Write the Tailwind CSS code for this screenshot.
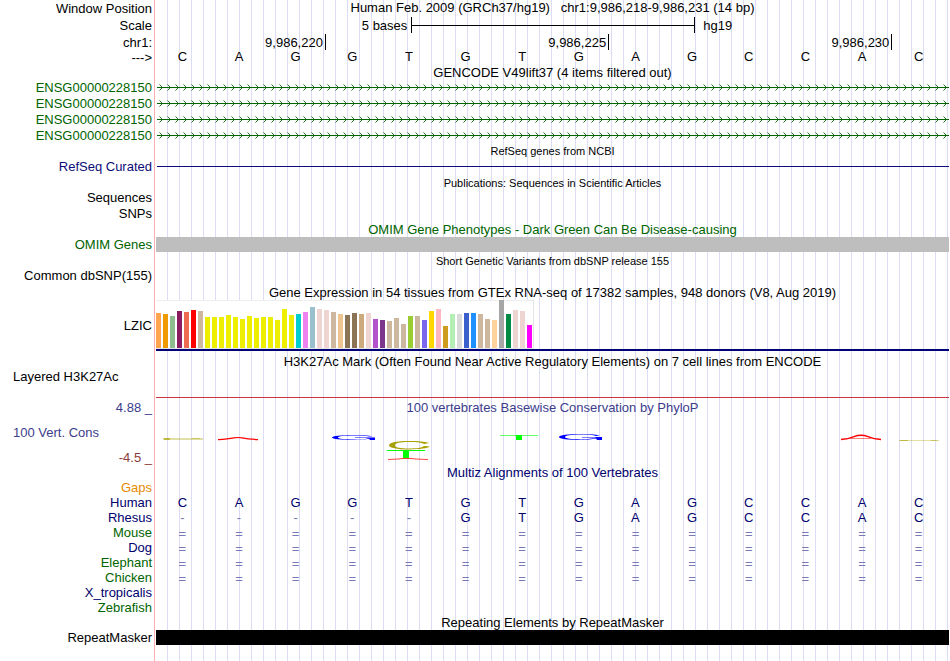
<!DOCTYPE html>
<html lang="en">
<head>
    <meta charset="UTF-8">
    <meta name="viewport" content="width=device-width, initial-scale=1.0">
    <title>Human chr1:9,986,218-9,986,231 - Genome Browser</title>
    <script src="https://cdn.jsdelivr.net/npm/@tailwindcss/browser@4"></script>
</head>
<body class="bg-white font-['Liberation_Sans',Arial,sans-serif] text-[13px] leading-[15px] text-black">
    <!-- Guide lines are painted behind every track -->
    <main class="min-h-screen pr-px bg-[linear-gradient(#ffb0b0,#ffb0b0),repeating-linear-gradient(to_right,transparent_0_11px,#dcdcf5_11px_12px)] bg-size-[1px_100%,100%_100%] bg-[position:154px_0,156px_0] bg-no-repeat">

        <!-- Ruler -->
        <section>
            <div class="grid grid-cols-[156px_1fr]">
                <div class="pt-px pr-1 text-right">Window Position</div>
                <h1 class="text-center whitespace-pre">Human Feb. 2009 (GRCh37/hg19)   chr1:9,986,218-9,986,231 (14 bp)</h1>
            </div>
            <div class="grid grid-cols-[156px_1fr] pt-px">
                <div class="pt-px pr-1 text-right">Scale</div>
                <div class="flex items-center">
                    <div class="w-[32.2%] pr-1 text-right">5 bases</div>
                    <div class="flex h-4 w-[35.8%] items-center border-x border-black">
                        <div class="h-px w-full bg-black"></div>
                    </div>
                    <div class="pl-2">hg19</div>
                </div>
            </div>
            <div class="grid grid-cols-[156px_1fr] pt-px">
                <div class="pt-px pr-1 text-right">chr1:</div>
                <div class="grid grid-cols-14 text-right">
                    <div class="col-span-3 border-r border-black pt-px pr-0.5">9,986,220</div>
                    <div class="col-span-5 border-r border-black pt-px pr-0.5">9,986,225</div>
                    <div class="col-span-5 border-r border-black pt-px pr-0.5">9,986,230</div>
                </div>
            </div>
            <div class="grid grid-cols-[156px_1fr]">
                <div class="pr-1 text-right">---&gt;</div>
                <div id="bases" class="grid grid-cols-14 text-center leading-[13px]"></div>
            </div>
        </section>

        <!-- GENCODE -->
        <section>
            <h2 class="pl-[156px] text-center">GENCODE V49lift37 (4 items filtered out)</h2>
            <div id="gencode" class="text-[#006400]"></div>
        </section>

        <!-- RefSeq -->
        <section>
            <h2 class="pl-[156px] text-center text-[11px]">RefSeq genes from NCBI</h2>
            <div class="grid grid-cols-[156px_1fr] items-center text-[#0c0c78]">
                <div class="pr-1 text-right">RefSeq Curated</div>
                <div class="ml-px h-px bg-[#0c0c78]"></div>
            </div>
        </section>

        <!-- Publications -->
        <section class="pt-0.5">
            <h2 class="pl-[156px] text-center text-[11px] leading-[14px]">Publications: Sequences in Scientific Articles</h2>
            <div class="w-[156px] pr-1 text-right leading-4">Sequences</div>
            <div class="w-[156px] pr-1 text-right leading-4">SNPs</div>
        </section>

        <!-- OMIM -->
        <section class="text-[#006400]">
            <h2 class="pt-px pl-[156px] text-center leading-[14px]">OMIM Gene Phenotypes - Dark Green Can Be Disease-causing</h2>
            <div class="grid grid-cols-[156px_1fr]">
                <div class="pr-1 text-right">OMIM Genes</div>
                <div class="bg-[#bebebe]"></div>
            </div>
        </section>

        <!-- dbSNP -->
        <section class="pt-0.5">
            <h2 class="pl-[156px] text-center text-[11px] leading-[14px]">Short Genetic Variants from dbSNP release 155</h2>
            <div class="w-[156px] pr-1 text-right">Common dbSNP(155)</div>
        </section>

        <!-- GTEx -->
        <section class="pt-0.5">
            <h2 class="pl-[156px] text-center">Gene Expression in 54 tissues from GTEx RNA-seq of 17382 samples, 948 donors (V8, Aug 2019)</h2>
            <div class="grid grid-cols-[156px_1fr] items-center">
                <div class="pr-1 text-right">LZIC</div>
                <div class="border-b-2 border-[#000078]">
                    <div id="gtex" class="flex h-[49px] w-[378px] items-end gap-0.5 border-r border-b border-[#e6e6e6] bg-white shadow-[inset_0_1px_#eeeeee]"></div>
                </div>
            </div>
        </section>

        <!-- H3K27Ac -->
        <section class="pt-[3px]">
            <h2 class="pl-[156px] text-center">H3K27Ac Mark (Often Found Near Active Regulatory Elements) on 7 cell lines from ENCODE</h2>
            <div class="h-7 pl-[13px]">Layered H3K27Ac</div>
            <div class="ml-[156px] h-px bg-[#cc3340]"></div>
        </section>

        <!-- PhyloP conservation -->
        <section class="grid grid-cols-[156px_1fr] pt-0.5 text-[#3c3c8c]">
            <div class="flex flex-col justify-between">
                <div class="pr-1 text-right">4.88 _</div>
                <div class="pl-[13px]">100 Vert. Cons</div>
                <div class="pr-1 text-right text-[#8c3c3c]">-4.5 _</div>
            </div>
            <div>
                <h2 class="text-center">100 vertebrates Basewise Conservation by PhyloP</h2>
                <svg class="block h-[50px] w-full" viewBox="0 0 793 50" preserveAspectRatio="none">
                    <defs>
                        <path id="logoG" fill="#0000ff" fill-rule="evenodd" d="M41 1.5C36 .3 29 0 22 0C9 0 0 1.2 0 3C0 4.8 9 6 21 6C28 6 33 5.5 37 4.6L38 6H43V3H23V3.6H37C34 4.8 28 5.4 22 5.4C12 5.4 6 4.4 6 3C6 1.6 12 .6 22 .6C29 .6 34 1 37 1.9Z"/>
                    </defs>
                    <!-- C -->
                    <rect x="7" y="23" width="40" height="2" fill="#a8a000" opacity=".35"/>
                    <rect x="8" y="23" width="6" height="2" fill="#a8a000" opacity=".6"/>
                    <rect x="36" y="23" width="8" height="1" fill="#a8a000" opacity=".4"/>
                    <!-- A -->
                    <path d="M62 24.6Q72 24 78 22.8Q82 22.2 86 22.8Q92 24 102 24.6" fill="none" stroke="#ff0000" stroke-width="1.2"/>
                    <!-- G -->
                    <use href="#logoG" transform="translate(176 20) scale(1 .84)"/>
                    <!-- C over T over A -->
                    <path fill="#a8a000" fill-rule="evenodd" d="M273 28C269 26.4 262 26 253 26C241 26 233 27.6 233 30.2C233 32.800 241 34.400 253 34.400C264 34.400 271 33.4 274 31.600L268 31C266 32.800 261 33.500 253 33.500C244 33.500 239 32.400 239 30.200C239 28 244 26.900 253 26.900C261 26.900 266 27.500 268 29Z"/>
                    <path fill="#00ff00" d="M231 35H269V36H253V43H247V36H231Z"/>
                    <path d="M232 44.500Q242 44.200 247 43.500H255Q260 44.200 272 44.500" fill="none" stroke="#ff0000" stroke-width="1" opacity=".75"/>
                    <!-- T -->
                    <rect x="344" y="20" width="38" height="1" fill="#00ff00" opacity=".6"/>
                    <rect x="360" y="20" width="6" height="5" fill="#00ff00"/>
                    <!-- G -->
                    <use href="#logoG" transform="translate(403 19)"/>
                    <!-- A -->
                    <path d="M685 24.500Q692 24 698 21.600Q705 18.800 712 21.600Q718 24 725 24.500" fill="none" stroke="#ff0000" stroke-width="1.500"/>
                    <rect x="694" y="23" width="21" height="1" fill="#ff0000" opacity=".5"/>
                    <!-- C -->
                    <rect x="743" y="25" width="40" height="1" fill="#a8a000" opacity=".35"/>
                    <rect x="744" y="25" width="8" height="1" fill="#a8a000" opacity=".6"/>
                    <rect x="775" y="25" width="6" height="1" fill="#a8a000" opacity=".4"/>
                </svg>
            </div>
        </section>

        <!-- Multiz alignment -->
        <section class="text-[#00006e]">
            <h2 id="multiz" class="pl-[156px] text-center">Multiz Alignments of 100 Vertebrates</h2>
            <table class="w-full table-fixed" aria-labelledby="multiz">
                <colgroup>
                    <col class="w-[156px]">
                    <col span="14">
                </colgroup>
                <tbody id="alignment"></tbody>
            </table>
        </section>

        <!-- RepeatMasker -->
        <section>
            <h2 class="pl-[156px] text-center">Repeating Elements by RepeatMasker</h2>
            <div class="grid grid-cols-[156px_1fr]">
                <div class="pr-1 text-right">RepeatMasker</div>
                <div class="bg-black"></div>
            </div>
        </section>
    </main>

    <script>
        const sequence = 'CAGGTGTGAGCCAC';

        // Reference bases under the ruler
        document.getElementById('bases').innerHTML =
            [...sequence].map(base => `<div class="pr-1">${base}</div>`).join('');

        // Four transcripts, all on the forward strand
        const transcripts = ['ENSG00000228150', 'ENSG00000228150', 'ENSG00000228150', 'ENSG00000228150'];
        document.getElementById('gencode').innerHTML = transcripts.map((name, i) => `
            <div class="grid grid-cols-[156px_1fr]">
                <div class="pr-1 text-right leading-4">${name}</div>
                <svg class="block h-4 w-full">
                    <defs>
                        <pattern id="strand${i}" width="8" height="16" patternUnits="userSpaceOnUse">
                            <path d="M3.500 4.500L6.500 7.500L3.500 10.500" fill="none" stroke="#006400" stroke-width="0.9"/>
                        </pattern>
                    </defs>
                    <rect x="1" y="7" width="100%" height="1" fill="#006400"/>
                    <rect x="1" width="100%" height="16" fill="url(#strand${i})"/>
                </svg>
            </div>`).join('');

        // Median expression per tissue: [height, colour]
        const tissues = [
            [35, '#ffa54f'], [34, '#ee9a00'], [32, '#8fbc8f'], [37, '#8b1c62'], [36, '#ee6a50'], [38, '#ff0000'],
            [37, '#cdb79e'], [31, '#eeee00'], [31, '#eeee00'], [31, '#eeee00'], [33, '#eeee00'], [31, '#eeee00'],
            [29, '#eeee00'], [32, '#eeee00'], [30, '#eeee00'], [31, '#eeee00'], [31, '#eeee00'], [28, '#eeee00'],
            [39, '#eeee00'], [33, '#eeee00'], [34, '#00cdcd'], [36, '#ee82ee'], [41, '#9ac0cd'], [39, '#eed5d2'],
            [38, '#eed5d2'], [36, '#cdb79e'], [34, '#eec591'], [33, '#8b7355'], [35, '#8b7355'], [34, '#cdaa7d'],
            [35, '#eed5d2'], [29, '#b452cd'], [28, '#7a378b'], [27, '#cdb79e'], [30, '#cdb79e'], [24, '#cdb79e'],
            [32, '#9acd32'], [32, '#cdb79e'], [28, '#7a67ee'], [37, '#ffd700'], [39, '#ffb6c1'], [22, '#cd9b1d'],
            [34, '#b4eeb4'], [34, '#d9d9d9'], [35, '#3a5fcd'], [35, '#1e90ff'], [34, '#cdb79e'], [29, '#cdb79e'],
            [28, '#ffd39b'], [48, '#a6a6a6'], [34, '#008b45'], [38, '#eed5d2'], [37, '#eed5d2'], [23, '#ff00ff']
        ];
        document.getElementById('gtex').innerHTML = tissues.map(([height, colour]) =>
            `<div class="w-[5px] shrink-0" style="height:${height}px;background:${colour}"></div>`).join('');

        // Species rows: name, label class, aligned bases
        const species = [
            ['Gaps', 'text-[#e68a00]', ''],
            ['Human', 'text-[#00006e]', sequence],
            ['Rhesus', 'text-[#00006e]', '-----GTGAGCCAC'],
            ['Mouse', 'text-[#006400]', '=============='],
            ['Dog', 'text-[#00006e]', '=============='],
            ['Elephant', 'text-[#006400]', '=============='],
            ['Chicken', 'text-[#006400]', '=============='],
            ['X_tropicalis', 'text-[#00006e]', ''],
            ['Zebrafish', 'text-[#006400]', '']
        ];
        const cellClasses = {
            '-': 'p-0 pr-1 text-center text-[#7878b4]',
            '=': 'p-0 pt-0.5 pr-1 text-center leading-[13px] text-[#7878b4]'
        };
        document.getElementById('alignment').innerHTML = species.map(([name, colour, bases]) => {
            const cells = [...bases].map(base =>
                `<td class="${cellClasses[base] || 'p-0 pr-1 text-center'}">${base}</td>`).join('');
            return `<tr><th scope="row" class="p-0 pr-1 text-right font-normal"><span class="${colour}">${name}</span></th>${cells}</tr>`;
        }).join('');
    </script>
</body>
</html>
